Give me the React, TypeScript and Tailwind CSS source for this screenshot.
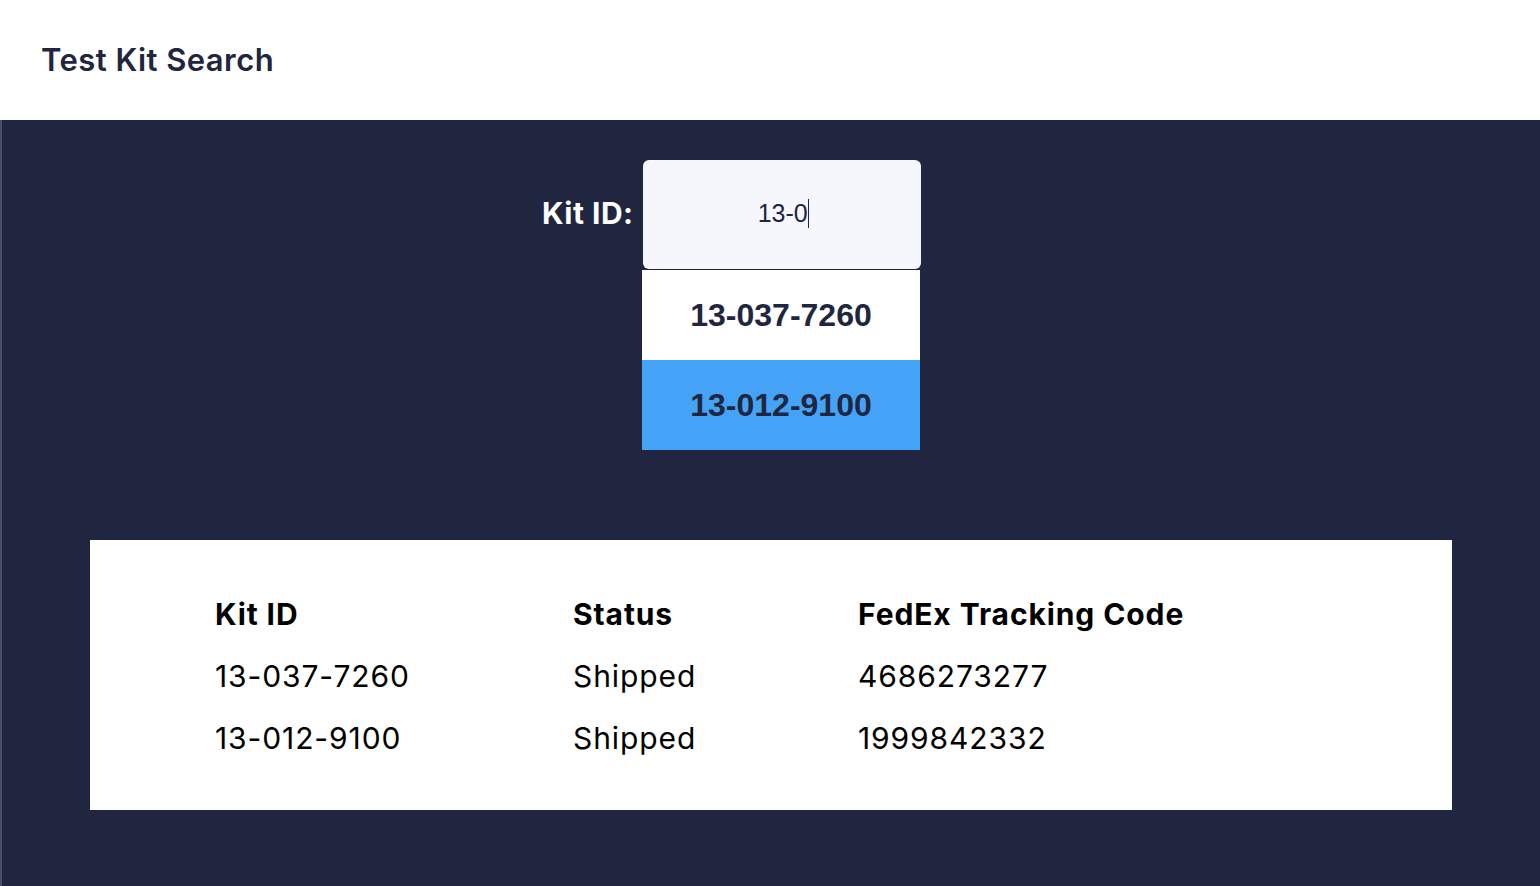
import React from "react";

const rows = [
  { id: "13-037-7260", status: "Shipped", code: "4686273277" },
  { id: "13-012-9100", status: "Shipped", code: "1999842332" },
];

export default function App() {
  return (
    <div className="w-[1540px] h-[886px] flex flex-col overflow-hidden" style={{ fontFamily: "Inter, 'Noto Sans', sans-serif" }}>
      <header className="h-[120px] bg-white flex items-center pl-[41px] shrink-0">
        <h1 className="text-[31px] font-semibold text-[#20263f] tracking-[0.45px]">Test Kit Search</h1>
      </header>
      <main className="flex-1 bg-[#20263f] border-l-2 border-[#4a5068] pt-[40px]">
        <div className="flex items-center ml-[540px]">
          <label className="w-[101px] text-white font-bold text-[30px] tracking-[0.5px] -mt-[3px]">Kit ID:</label>
          <div className="relative">
            <div className="w-[278px] h-[109px] bg-[#f5f7fc] rounded-[6px] flex items-center justify-center">
              <span className="text-[25px] text-[#20263f] ml-[3px] -mt-[1px]" style={{ fontFamily: "'Liberation Sans', Arial, sans-serif" }}>
                13-0<span className="inline-block w-[1.5px] h-[29px] bg-[#20263f] align-[-6px]" />
              </span>
            </div>
            <ul className="absolute left-[-1px] top-[110px] w-[278px] z-10" style={{ fontFamily: "'Liberation Sans', Arial, sans-serif" }}>
              <li className="h-[90px] bg-white flex items-center justify-center text-[32px] font-bold text-[#20263f]">13-037-7260</li>
              <li className="h-[90px] bg-[#45a3f7] flex items-center justify-center text-[32px] font-bold text-[#20263f]">13-012-9100</li>
            </ul>
          </div>
        </div>
        <section className="mt-[271px] ml-[88px] w-[1362px] bg-white pt-[43px] pb-[41px] pl-[125px]">
          <div className="grid grid-cols-[358px_285px_1fr] text-[30px] leading-[62px] text-black tracking-[0.9px]">
            <div className="font-bold">Kit ID</div>
            <div className="font-bold">Status</div>
            <div className="font-bold">FedEx Tracking Code</div>
            {rows.map((r) => (
              <React.Fragment key={r.id}>
                <div>{r.id}</div>
                <div>{r.status}</div>
                <div>{r.code}</div>
              </React.Fragment>
            ))}
          </div>
        </section>
      </main>
    </div>
  );
}
